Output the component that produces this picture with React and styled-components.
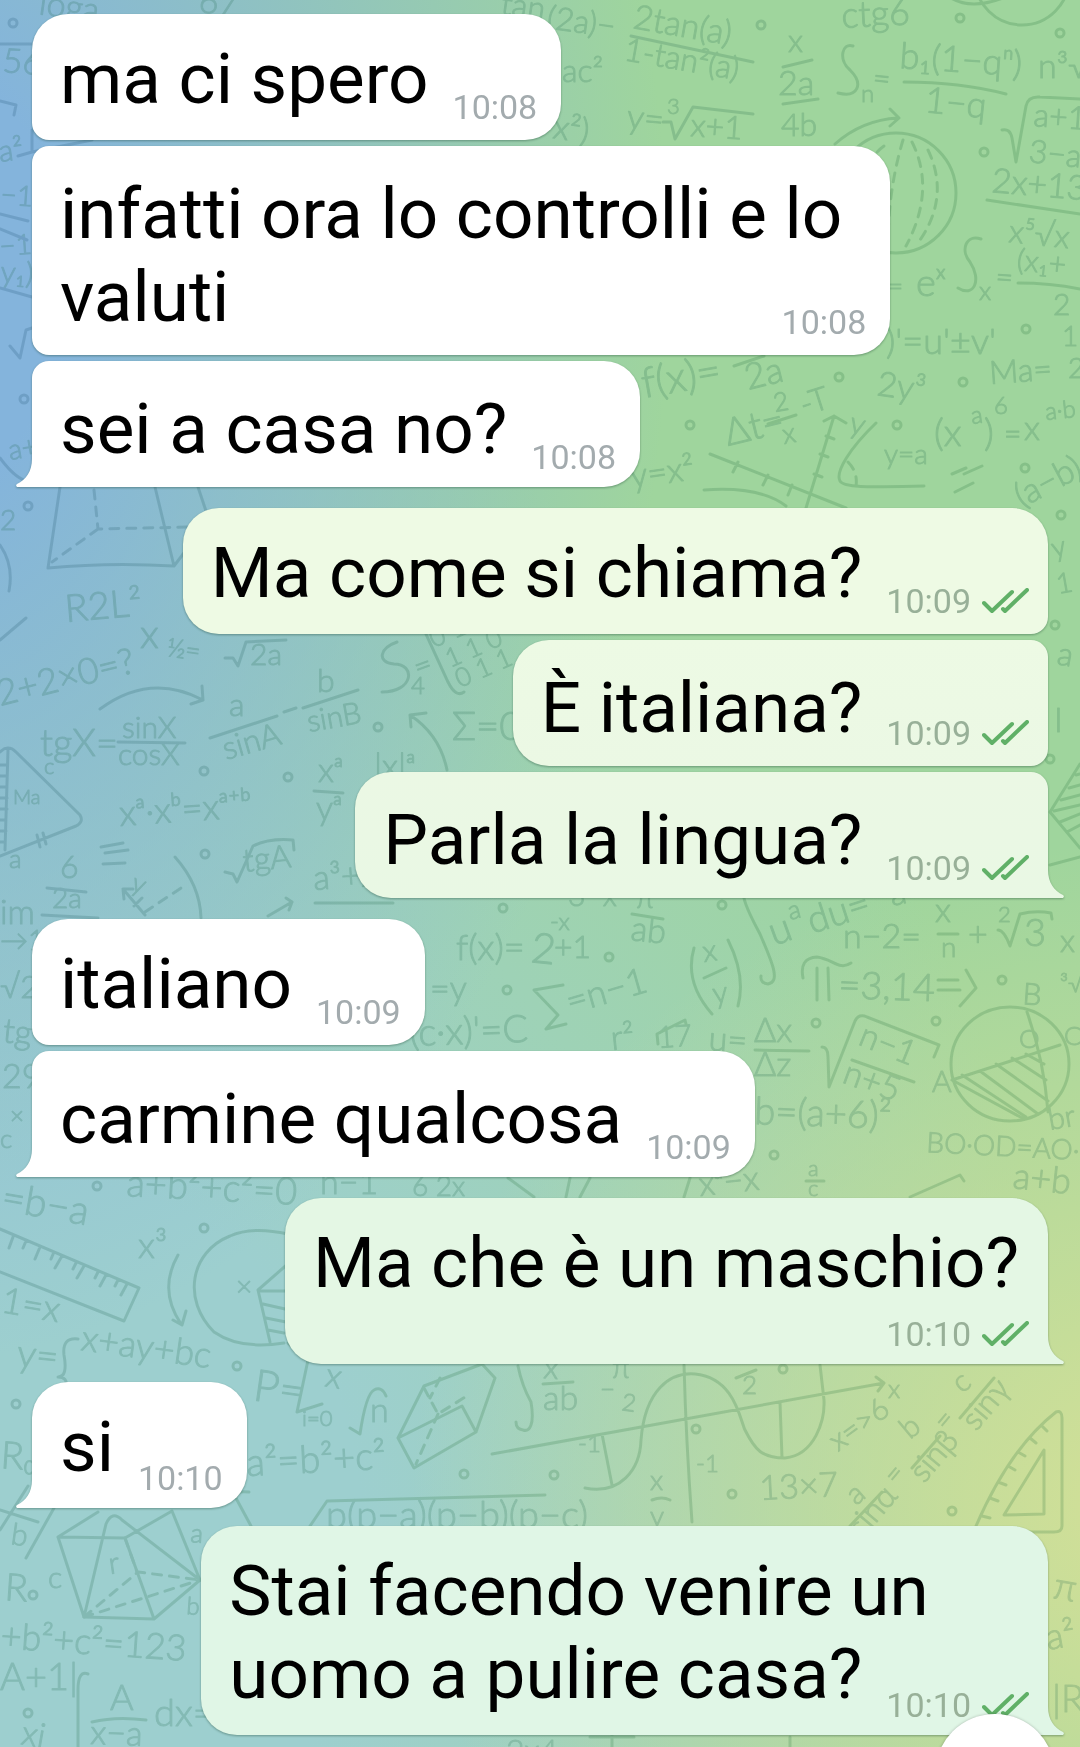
import styled, { createGlobalStyle, css } from 'styled-components'

const GlobalStyle = createGlobalStyle`
	* {
		box-sizing: border-box;
	}

	body {
		margin: 0;
		font-family: Roboto, 'Liberation Sans', sans-serif;
	}
`

const Page = styled.main`
	position: relative;
	min-height: 100vh;
	overflow: hidden;
	background:
		radial-gradient(ellipse 70% 62% at -8% 16%, #84b4dc 20%, transparent 100%),
		radial-gradient(ellipse 70% 38% at 108% 86%, #cfdf98 10%, transparent 100%),
		radial-gradient(ellipse 95% 68% at 5% 88%, #9dcfcf 30%, transparent 100%),
		#9fd59d;
`

const Wallpaper = styled.svg`
	position: absolute;
	top: 0;
	left: 0;
	width: 100%;
	height: 100%;
	opacity: 0.2;
	fill: none;
	stroke: url(#ink);
	stroke-width: 3;
	stroke-linecap: round;
	stroke-linejoin: round;

	& text {
		font-family: Lato, 'Open Sans', sans-serif;
		font-weight: 300;
		fill: #20684c;
		stroke: #20684c;
		stroke-width: 1;
	}
`

const Chat = styled.ol`
	position: relative;
	list-style: none;
	margin: 0;
	padding: 14px 32px 12px;
	display: flex;
	flex-direction: column;
`

const Message = styled.li`
	position: relative;
	display: flex;
	flex-direction: column;
	align-self: ${(p) => (p.$out ? 'flex-end' : 'flex-start')};
	margin-top: ${(p) => p.$space}px;
	padding: ${(p) => (p.$first ? '23px' : '26px')} ${(p) => (p.$out ? '19px' : '24px')}
		${(p) => (p.$first ? '20px' : '17px')} 28px;
	background: ${(p) => p.$color};
	filter: drop-shadow(0 1px 1px rgba(20, 60, 40, 0.4));
	${(p) => {
		const top = p.$first ? 36 : 17
		const bottom = p.$last ? 0 : 17
		return p.$out
			? css`
					border-radius: 36px ${top}px ${bottom}px 36px;
				`
			: css`
					border-radius: ${top}px 36px 36px ${bottom}px;
				`
	}}
`

const Line = styled.span`
	font-size: 71px;
	line-height: 83px;
	color: #000;
	padding-right: ${(p) => p.$pad || 0}px;
`

const LastRow = styled.div`
	display: flex;
	justify-content: space-between;
	align-items: flex-end;
	gap: 24px;
	min-height: 40px;
`

const Meta = styled.div`
	display: flex;
	align-items: center;
	gap: 11px;
	margin-left: auto;
	margin-bottom: ${(p) => (p.$last ? 10 : 13) - (p.$first ? 20 : 17)}px;
	font-size: 34px;
	line-height: 40px;
	color: ${(p) => (p.$out ? '#98b098' : '#a3abae')};
`

const TailShape = styled.svg`
	position: absolute;
	bottom: 0;
	width: 17px;
	height: 28px;
	${(p) => (p.$out ? 'right: -16px; transform: scaleX(-1);' : 'left: -16px;')}
`

const ScrollDown = styled.button`
	position: absolute;
	right: 25px;
	bottom: -87px;
	width: 120px;
	height: 120px;
	border: none;
	border-radius: 50%;
	background: #fff;
	box-shadow: 0 0 3px rgba(0, 0, 0, 0.25);
`

const messages = [
	{ lines: ['ma ci spero'], time: '10:08', first: true },
	{ lines: ['infatti ora lo controlli e lo', 'valuti'], time: '10:08', pad: 24 },
	{ lines: ['sei a casa no?'], time: '10:08', last: true },
	{ lines: ['Ma come si chiama?'], time: '10:09', out: true, first: true, space: 21, color: '#eefae4' },
	{ lines: ['È italiana?'], time: '10:09', out: true, color: 'linear-gradient(#edfae4, #ebf8e4)' },
	{ lines: ['Parla la lingua?'], time: '10:09', out: true, last: true, color: 'linear-gradient(#ebf8e4, #e9f8e4)' },
	{ lines: ['italiano'], time: '10:09', first: true, space: 21 },
	{ lines: ['carmine qualcosa'], time: '10:09', last: true },
	{ lines: ['Ma che è un maschio?', ''], time: '10:10', out: true, first: true, last: true, space: 21, pad: 10, color: '#e4f7e4' },
	{ lines: ['si'], time: '10:10', first: true, last: true, space: 18 },
	{ lines: ['Stai facendo venire un', 'uomo a pulire casa?'], time: '10:10', out: true, first: true, last: true, space: 18, color: '#e0f6e6' },
]

// x, y, size, rotation, text
const formulas = [
	[38, 14, 34, 8, 'loga'], [198, 12, 34, 6, '67'], [500, 14, 32, 8, 'tan'],
	[546, 28, 32, 8, '(2a)−'], [632, 28, 34, 10, '2tan(a)'], [623, 60, 32, 10, '1-tan²(a)'],
	[562, 82, 32, 0, 'ac²'], [788, 52, 32, 0, 'x'], [778, 95, 34, 0, '2a'], [781, 136, 32, 0, '4b'],
	[842, 28, 36, -3, 'ctg6'], [861, 102, 24, 0, 'n'], [872, 88, 30, 6, '='],
	[899, 68, 36, 4, 'b₁(1−qⁿ)'], [924, 112, 36, 6, '1−q'], [1038, 78, 34, 0, 'n³√'],
	[626, 128, 34, 6, 'y='], [667, 114, 22, 0, '3'], [690, 136, 32, 4, 'x+1'], [552, 138, 34, 8, 'x²)'],
	[1033, 126, 32, 4, 'a+1'], [1028, 162, 32, 6, '3−a'], [991, 192, 34, 5, '2x+13'], [1008, 242, 32, 6, 'x⁵√x'],
	[979, 300, 26, 0, 'x'], [995, 287, 30, 4, '='], [1016, 270, 30, 6, '(x₁+'],
	[1053, 315, 30, 0, '2'], [887, 296, 28, 0, '='], [916, 296, 38, 0, 'eˣ'],
	[886, 354, 36, 0, ")'=u'±v'"], [644, 398, 42, -10, 'f(x)='], [748, 390, 36, -14, '2a'],
	[876, 395, 34, 8, '2y³'], [990, 384, 32, -4, 'Ma='], [1062, 346, 28, 0, '1'], [1068, 378, 28, 0, '2'],
	[728, 446, 38, -14, 'Δt='], [775, 412, 26, -10, '2'], [804, 416, 32, -18, '-T'], [784, 444, 28, -10, 'x'],
	[848, 432, 30, 14, 'y'], [884, 464, 28, 0, 'y=a'], [934, 446, 38, 0, '(x'], [972, 424, 24, -8, 'a'],
	[984, 446, 38, 0, ')'], [994, 414, 24, 0, '6'], [1004, 444, 30, 0, '='], [1024, 440, 34, 0, 'x'],
	[1046, 420, 24, -6, 'a·b'], [632, 488, 34, -8, 'y=x²'], [1022, 508, 34, -28, '(a−b)'],
	[2, 72, 34, 4, '56'], [0, 162, 30, -8, 'a²'], [0, 204, 28, 4, '−1'], [0, 256, 28, -4, '−1'],
	[0, 282, 30, 4, 'y₁)'], [10, 460, 28, -10, 'a+'], [0, 530, 28, 0, '2'],
	[66, 622, 38, -5, 'R2L²'], [140, 648, 40, 0, 'x'], [166, 656, 26, 8, '½='], [250, 665, 30, 0, '2a'],
	[0, 706, 36, -14, '2+2×0=?'], [40, 756, 38, 0, 'tgX='], [122, 738, 30, 0, 'sinX'], [118, 765, 30, 0, 'cosX'],
	[229, 716, 32, 0, 'a'], [226, 760, 32, -16, 'sinA'], [317, 692, 32, 0, 'b'], [309, 732, 30, -10, 'sinB'],
	[411, 694, 24, 0, '4'], [418, 678, 30, -20, '='], [452, 740, 40, 0, 'Σ=0'],
	[434, 648, 26, -24, '0 1 0'], [450, 668, 26, -24, '1 1 0'], [460, 688, 26, -24, '0 1 1'],
	[318, 782, 34, 0, 'xᵃ'], [316, 820, 34, 0, 'yᵃ'], [374, 778, 34, 0, '|x|ᵃ'],
	[13, 804, 20, 0, 'Ma'], [9, 868, 26, 0, 'a'], [44, 774, 22, 0, 'c'], [120, 826, 36, -4, 'xᵃ·xᵇ=xᵃ⁺ᵇ'],
	[244, 872, 32, -6, 'tgA'], [314, 890, 34, -4, 'a³+x'], [60, 878, 32, 0, '6'], [52, 908, 28, 0, '2a'],
	[0, 924, 34, 0, 'im'], [0, 950, 28, 0, '→1'], [130, 890, 26, 20, 'y'], [0, 998, 32, 0, '√2'],
	[2, 1042, 34, 6, 'tg'], [2, 1088, 34, 0, '29'], [10, 1124, 24, 0, '×'], [0, 1148, 26, 0, 'c'],
	[1056, 664, 32, 10, 'a'], [1054, 732, 34, 0, 'I'], [1054, 558, 28, -14, 'y'], [1058, 594, 28, -10, '1'],
	[568, 906, 30, 0, '3−x'], [456, 960, 36, 0, 'f(x)='], [530, 962, 42, 6, '2'], [550, 930, 24, 0, '-x'],
	[554, 958, 32, 0, '+1'], [630, 940, 34, 6, 'ab'], [636, 908, 30, 0, 'π'], [774, 946, 40, -20, 'u'],
	[790, 920, 26, -14, 'a'], [812, 934, 38, -18, 'du='], [892, 906, 34, -12, 'a+'],
	[843, 948, 34, 0, 'n−2='], [935, 922, 34, 0, 'x'], [941, 957, 28, 0, 'n'], [968, 946, 34, 0, '+'],
	[998, 922, 22, 0, '2'], [1024, 946, 38, 0, '3'], [1060, 952, 32, 0, 'x'], [430, 1000, 34, 0, '=y'],
	[570, 1014, 36, -16, '=n−1'], [704, 962, 30, -8, 'x'], [714, 1004, 30, -8, 'y'],
	[838, 998, 38, 2, '=3,14'], [1022, 1004, 30, 4, 'B'], [932, 1092, 30, 0, 'A'], [1064, 1045, 26, 0, 'C'],
	[1019, 1048, 26, 0, 'O'], [1060, 992, 24, 0, '³√'], [410, 1046, 38, -2, "(c·x)'=C"],
	[612, 1050, 34, -6, 'r²'], [658, 1048, 30, -4, '17'], [708, 1050, 34, 4, 'u='], [754, 1042, 34, 0, 'Δx'],
	[754, 1076, 34, 0, 'Δz'], [857, 1044, 34, 22, 'n−1'], [841, 1082, 34, 20, 'n+5'],
	[754, 1124, 38, 2, 'b=(a+6)²'], [926, 1152, 28, 3, 'BO·OD=AO·O'], [1012, 1188, 36, 6, 'a+b'],
	[1050, 1130, 30, -10, 'br'], [700, 1196, 34, -6, 'xᵃ−x'], [808, 1176, 22, 0, 'a'], [808, 1196, 22, 0, 'c'],
	[412, 1196, 28, 0, '6 2x'], [0, 1210, 40, 10, '=b−a'], [126, 1196, 38, 3, 'a+b²+c²=0'],
	[320, 1194, 34, 0, 'n−1'], [138, 1258, 36, 0, 'x³'], [236, 1296, 28, 0, '×'], [0, 1312, 36, 10, '1=x'],
	[16, 1366, 38, 6, 'y='], [80, 1350, 36, 8, 'x+ay+bc'], [252, 1400, 44, 8, 'P='],
	[324, 1386, 34, 10, 'x'], [302, 1426, 22, 0, 'i=0'], [370, 1422, 34, 0, 'n'], [247, 1476, 38, -3, 'a²=b²+c²'],
	[0, 1468, 38, 4, 'R₀'], [10, 1544, 30, 8, 'b'], [110, 1574, 30, -8, 'r'], [4, 1600, 38, 4, 'R'],
	[48, 1588, 30, 0, 'c'], [190, 1542, 26, 4, 'a'], [186, 1614, 24, 4, 'b'], [0, 1648, 36, 4, '+b²+c²=123'],
	[0, 1690, 38, 0, 'A+1|'], [110, 1710, 36, 0, 'A'], [90, 1744, 34, 2, 'x−a'], [154, 1726, 38, 0, 'dx='],
	[20, 1744, 34, 10, 'xi'], [543, 1378, 32, 4, 'x'], [543, 1410, 34, 0, 'ab'], [612, 1378, 30, 0, 'π'],
	[600, 1398, 26, 0, '−'], [621, 1410, 24, 8, '2'], [742, 1394, 26, 0, '2'], [578, 1452, 24, 0, '-1'],
	[696, 1472, 24, 0, '-1'], [888, 1398, 26, 0, 'x'], [650, 1490, 28, 0, 'x'], [650, 1526, 28, 0, 'y'],
	[760, 1500, 34, -3, '13×7'], [838, 1452, 30, -36, 'x=>6'], [910, 1440, 30, -40, 'b'],
	[924, 1484, 32, -50, 'sinβ'], [962, 1394, 30, -40, 'c'], [976, 1432, 32, -50, 'sinγ'],
	[856, 1506, 30, -40, 'a'], [862, 1540, 32, -50, 'sinα'], [896, 1486, 28, -50, '='], [946, 1432, 28, -50, '='],
	[326, 1528, 38, 0, 'p(p−a)(p−b)(p−c)'], [1052, 1598, 38, 10, 'π'], [1048, 1650, 36, -10, 'a²'],
	[1052, 1712, 38, 0, '|R'], [506, 1762, 32, 0, '2x4'],
]

const strokes = [
	'M853 46C842 42 838 60 850 70C864 84 858 98 838 93', 'M981 239C966 234 960 250 970 262C982 280 974 298 958 288',
	'M397 642C380 648 376 662 394 664C416 664 414 692 382 692',
	'M563 985L534 990L558 1015L546 1029L566 1024', 'M332 1346L288 1343L308 1360L297 1412L322 1404',
	'M803 978q-4-20 14-21c16 2 22 14 34 6M817 968v32M828 968l1 32', 'M938 980h20m-20 10h22M966 970l10 18-16 18',
	'M631 36L753 62', 'M783 67l29-7', 'M783 104l35-5', 'M904 82Q960 82 1006 94', 'M663 122l8 0 4 17 18-32 60 7',
	'M1002 130q8-2 10 8l4 24 10-56q2-10 14-9l40 2', 'M987 200L1080 214', 'M1018 283Q1050 283 1080 289',
	'M835 144Q862 120 898 118m-8-9l9 9-9 8', 'M948-4q22 16 60 0', 'M734 366l30-10', 'M768 424l28-9',
	'M806 508L834 416m-10 5l10-5 12 7M826 436l8 3M820 454l8 3M814 474l8 3',
	'M876 423C850 448 835 472 840 481C844 488 870 487 924 486', 'M710 454L846 508M738 462l-5 10M768 475l-5 10M792 485l-4 10',
	'M704 490Q760 486 786 506', 'M952 474l14-6m-2 6l18-8M955 492l18-9', 'M0 44h32', 'M0 101l16 4-2 10', 'M32 130v22l-14 4m14-4l60-12',
	'M0 214l28 7M0 229l27 11M0 288l32 9', 'M10 346l10 12 6-28 6-2', 'M0 458q16 22 30 24',
	'M60 487L48 568 Q110 562 174 566L155 487M174 566l16-21M198 487l8 24', 'M0 545q14 20 9 46', 'M0 640l26-22',
	'M225 658h8l5 8 8-24 40-2', 'M100 709Q150 672 203 700l-1-14m1 14l-12 4', 'M118 742L185 743', 'M210 738l67-22M284 712l12-4M303 708l55-18',
	'M447 770Q440 735 410 715l16-2m-16 2l1 12', 'M426 634l22 48q8 16 16 10', 'M314 791l29 2',
	'M0 752q8-8 16 0L80 815Q84 822 76 826L0 856M8 750L5 850M0 765h7M0 776h7M0 787h7M0 798h7M0 809h7M0 820h6M0 831h6M0 842h5M37 835l3 12M43 833l3 11',
	'M101 847l22-4M105 853l23-3M103 864l22-1', 'M225 872l8 2 4 8 16-36q16-8 40-6l1 10', 'M315 903h78', 'M47 888l39 4M42 915l56 3',
	'M175 857Q200 885 201 918M145 915l-22-26 10 0m-10 0l1 10M134 906l8-8', 'M268 916l24-14-6-4m6 4l-3 8',
	'M1080 764L1050 812L1080 848M1076 775l4-1M1069 788l11-3M1061 800l19-5M1054 811l26-6M1060 822l20-8M1067 832l13-7M1050 865l30-8',
	'M632 914l31 5', 'M744 898q2 10 16 36c10 24 22 48 8 50q-8-1-7-8', 'M694 948q-10 34 18 66M728 940q18 36 10 66M704 978l22-10', 'M938 934h20',
	'M998 930q6 0 12 16l10-32q16-4 31-1l1 6', 'M755 1050l54 1',
	'M822 1047q6 0 6 10l1 30 26-66q4-8 12-4l72 28-5 12', 'M852 1060l62 22', 'M658 1044l-1-10 28-14 1 4',
	'M952 1080L1060 1045M1027 1012Q1044 1060 1048 1112M952 1080l72 39M962 1075l64 42M980 1071l58 43M996 1064l52 37M1012 1058l34 22M1026 1054l18 10',
	'M806 1181h18', 'M508 1178l26 19M570 1178l-4 19M590 1178l-10 19M690 1178l-6 19', 'M910 1197l50-22 4 6',
	'M0 1229L139 1288L124 1321L0 1272M13 1237l-4 11M26 1241l-3 7M40 1247l-5 12M54 1252l-3 7M62 1256l-7 12M76 1263l-3 6M84 1266l-7 12M98 1272l-3 6M106 1275l-6 11M118 1280l-3 6M127 1284l-6 11',
	'M178 1255Q158 1290 181 1324m-8-4l9 5 4-14', 'M288 1234Q252 1226 230 1236C190 1252 182 1300 214 1332Q240 1350 284 1343M290 1262l-32 28 12 52M260 1291h26M263 1304l22 5M266 1318l20 4M268 1330l16 3',
	'M78 1339q-16-2-14 16 4 22-6 22 10 0 8 10', 'M350 1428l10 6q6-40 14-44t12 6',
	'M58 1537l67 1L154 1619L84 1617Z M58 1537L98 1512M84 1617L106 1524q6-14 16-4L200 1580L154 1619M125 1538L172 1511L200 1580',
	'M0 1530l28-44M0 1510l38 12M26 1558l28-50', 'M78 1750V1690q0-20 10-16M92 1722q24-6 54-2',
	'M237 1500q-6-10 12-8M237 1500l14 26', 'M310 1526L327 1501L545 1495',
	'M398 1438L424 1386L482 1364 495 1378 476 1432L414 1468ZM398 1438l64-32 14 26', 'M518 1366q4 20 13 36c4 24-2 30-8 28q-7-1-7-8',
	'M543 1384l30-2M736 1378l20-8', 'M492 1454L884 1383l-8-6m8 6l-6 8M602 1434l10 51',
	'M684 1365Q686 1440 692 1522M585 1488C620 1495 640 1470 641 1440C645 1390 670 1372 695 1374C735 1378 740 1420 745 1430C755 1450 762 1458 785 1458C815 1455 825 1420 824 1400L820 1365M780 1402l2 56',
	'M850 1526l32-34M912 1468l28-32M960 1418l34-40', 'M976 1526Q1010 1448 1056 1412q6-2 6 6V1526q0 6-8 6h-72M1004 1515L1044 1450V1514ZM982 1516l8 2M990 1498l8 3M998 1482l8 3M1008 1466l7 4M1018 1452l7 4M1030 1438l6 5M1042 1426l5 5',
	'M652 1500q10-4 18 0M612 1735v12M590 1737h44M790 1737v10',
]

const dashed = [
	'M94 490L98 529L190 527M98 529L52 562', 'M903 140Q888 190 888 246M912 142Q936 190 906 246M928 150Q950 196 920 240M884 146q-14 10-20 30',
	'M84 1617L138 1572L200 1580M84 1617L200 1580M125 1538l12 34', 'M424 1388l14 26 32-20M438 1414l-22 50', 'M848 462q10 10 8 24',
	'M145 912l36-24', 'M440 1378l-10 20',
]

const dots = [
	[761, 25], [960, 18], [1060, 33], [984, 152], [1026, 329], [839, 377], [963, 382], [690, 425], [897, 425],
	[1025, 468], [13, 23], [24, 399], [28, 506], [204, 771], [288, 777], [205, 854], [378, 727], [1061, 515],
	[1055, 625], [1050, 759], [503, 908], [722, 905], [609, 957], [507, 990], [1002, 980], [816, 1023], [936, 1021],
	[774, 1155], [97, 1186], [204, 1228], [237, 1366], [16, 1404], [33, 1595], [28, 1713], [464, 1474], [554, 1475],
	[732, 1494], [696, 1429], [952, 1511], [783, 1369],
]

const Doodles = () => {
	return (
		<Wallpaper viewBox='0 0 1080 1747' preserveAspectRatio='xMinYMin slice' aria-hidden='true'>
			<defs>
				<linearGradient id='ink' gradientUnits='userSpaceOnUse' x1='0' y1='400' x2='700' y2='700'>
					<stop offset='0' stopColor='#1c5070' />
					<stop offset='1' stopColor='#226e38' />
				</linearGradient>
			</defs>
			{formulas.map(([x, y, size, angle, text], i) => (
				<text key={i} fontSize={size} transform={`translate(${x} ${y}) rotate(${angle})`}>
					{text}
				</text>
			))}
			<path d={strokes.join('')} />
			<path d={dashed.join('')} strokeDasharray='9 8' />
			{dots.map(([x, y]) => (
				<circle key={`${x}-${y}`} cx={x} cy={y} r='4' />
			))}
			<circle cx='896' cy='193' r='60' />
			<circle cx='1022' cy='-22' r='47' />
			<ellipse cx='1010' cy='1064' rx='59' ry='57' />
		</Wallpaper>
	)
}

const Tail = ({ out, color }) => {
	return (
		<TailShape $out={out} viewBox='0 0 17 28' aria-hidden='true'>
			<path d='M17 0H16C16 12 10 21 1 25C-0.5 26 0 28 2 28H17Z' fill={color} />
		</TailShape>
	)
}

const Checks = () => {
	return (
		<svg width='47' height='26' viewBox='0 0 47 26' fill='none' stroke='#60b067' strokeWidth='4' strokeLinecap='round' strokeLinejoin='round' role='img' aria-label='Letto'>
			<path d='M2 15L10 23L30 4' />
			<path d='M21 21L23 23L45 2' />
		</svg>
	)
}

const Bubble = (props) => {
	const { lines, time, out, first, last, pad, space = 6, color = '#fff' } = props
	const rest = lines.slice(0, -1)
	const end = lines[lines.length - 1]
	// the tail joins the bottom of the bubble, so it takes the end colour of a gradient
	const tailColor = color.startsWith('linear') ? '#e9f8e4' : color
	return (
		<Message $out={out} $first={first} $last={last} $space={space} $color={color}>
			{rest.map((line) => (
				<Line key={line} $pad={pad}>
					{line}
				</Line>
			))}
			<LastRow>
				{end && <Line>{end}</Line>}
				<Meta $out={out} $first={first} $last={last}>
					<time>{time}</time>
					{out && <Checks />}
				</Meta>
			</LastRow>
			{last && <Tail out={out} color={tailColor} />}
		</Message>
	)
}

const App = () => {
	return (
		<>
			<GlobalStyle />
			<Page>
				<Doodles />
				<Chat>
					{messages.map((message, i) => (
						<Bubble key={i} {...message} space={i === 0 ? 0 : message.space} />
					))}
				</Chat>
				<ScrollDown type='button' aria-label='Vai in fondo' />
			</Page>
		</>
	)
}

export default App
